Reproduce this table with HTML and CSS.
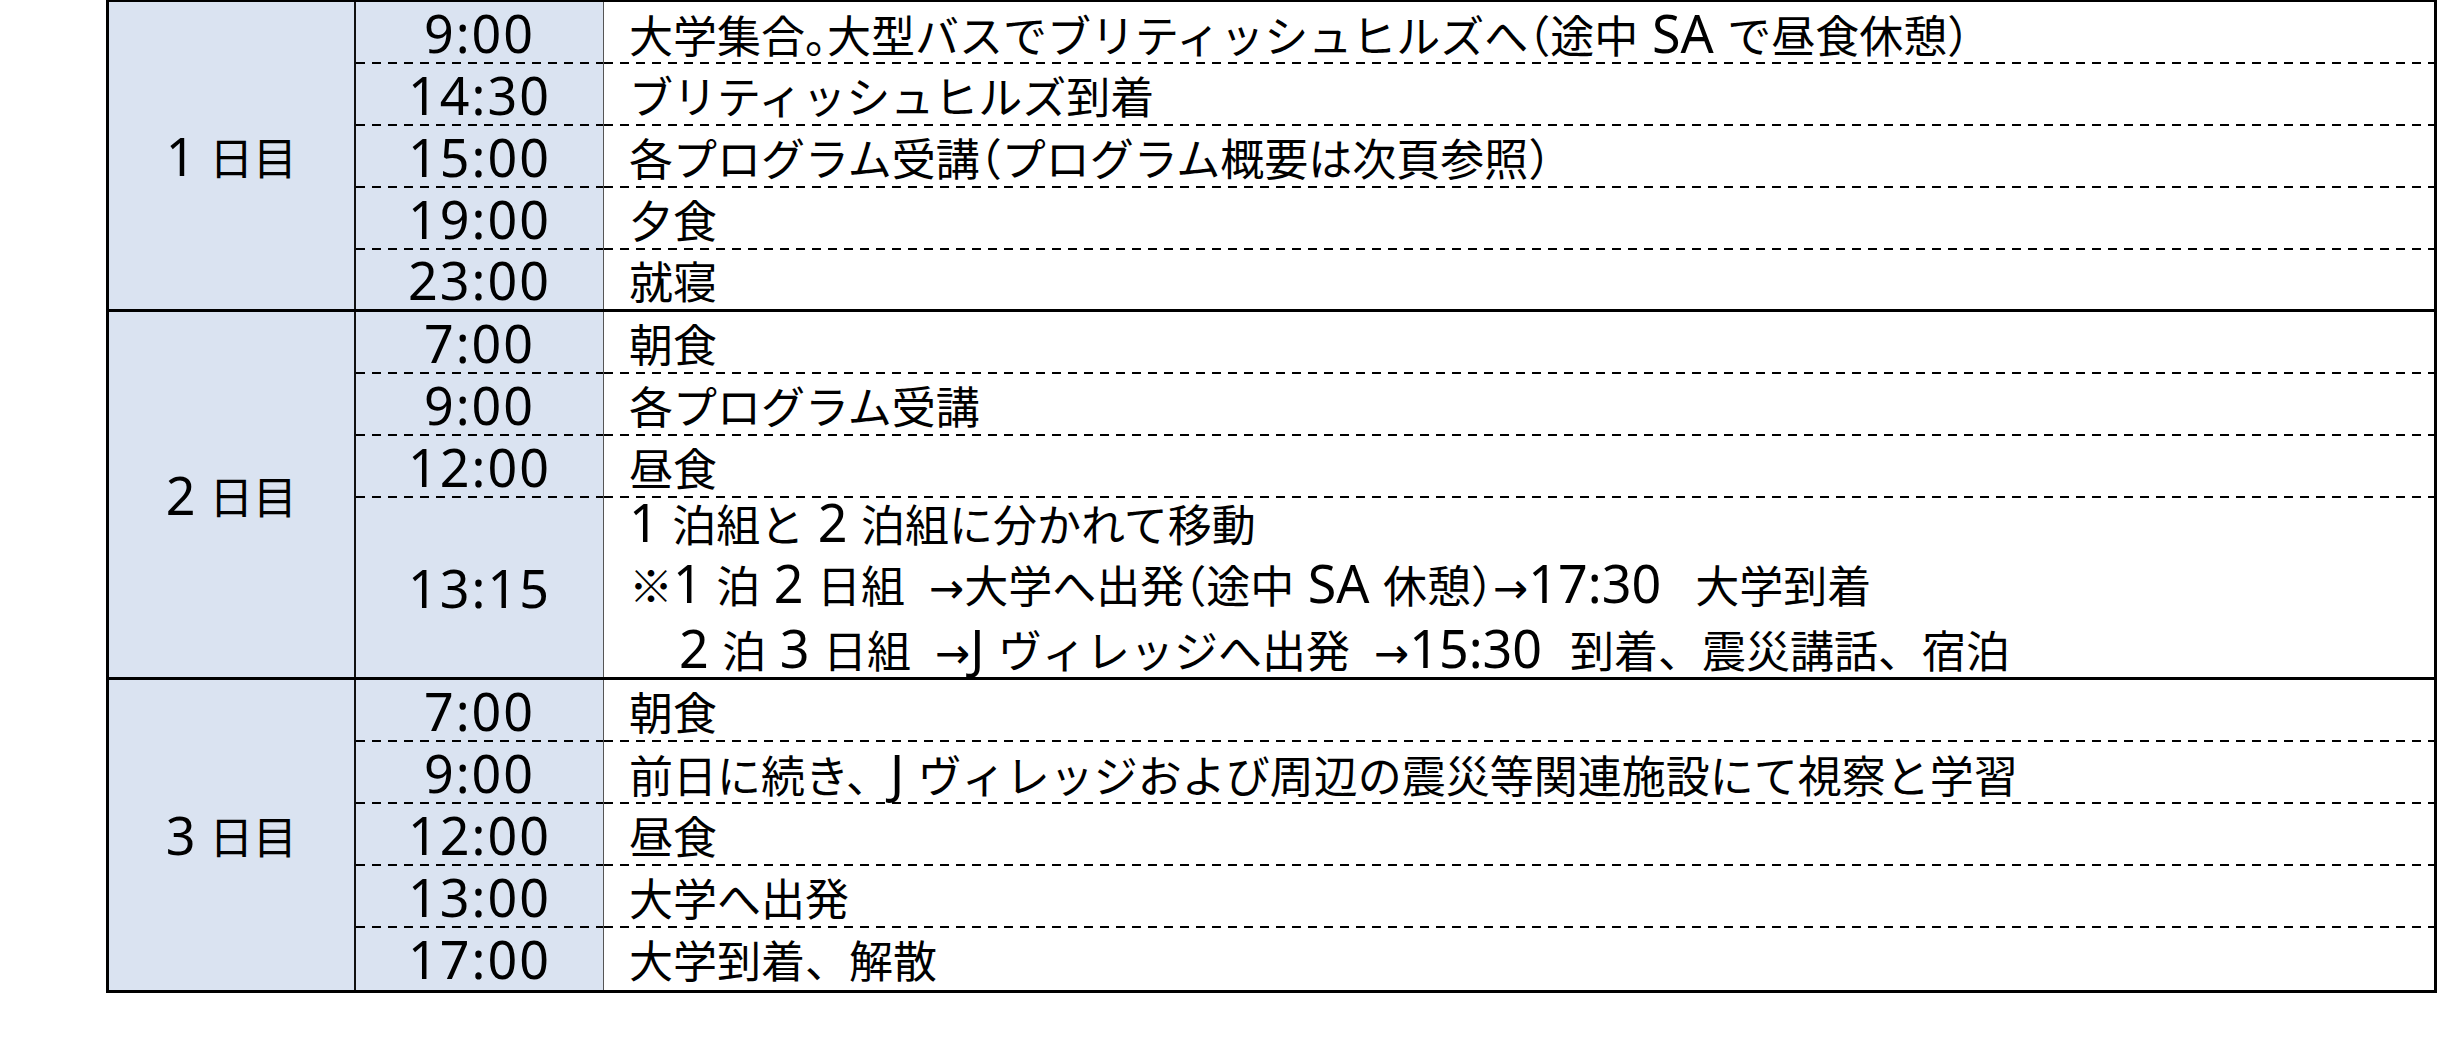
FILE: index.html
```html
<!DOCTYPE html>
<html lang="ja">
<head>
<meta charset="utf-8">
<title>日程表</title>
<link rel="stylesheet" href="styles.css">
</head>
<body>
<div class="schedule">
  <div class="group">
    <div class="day"><span class="lat">1 </span>日目</div>
    <div class="entries">
      <div class="entry"><div class="time">9:00</div><div class="text"><div class="line">大学集合<span class="h">。</span>大型バスでブリティッシュヒルズへ<span class="h">（</span>途中<span class="lat"> SA </span>で昼食休憩<span class="h">）</span></div></div></div>
      <div class="entry"><div class="time">14:30</div><div class="text"><div class="line">ブリティッシュヒルズ到着</div></div></div>
      <div class="entry"><div class="time">15:00</div><div class="text"><div class="line">各プログラム受講<span class="h">（</span>プログラム概要は次頁参照<span class="h">）</span></div></div></div>
      <div class="entry"><div class="time">19:00</div><div class="text"><div class="line">夕食</div></div></div>
      <div class="entry short"><div class="time">23:00</div><div class="text"><div class="line">就寝</div></div></div>
    </div>
  </div>
  <div class="group">
    <div class="day"><span class="lat">2 </span>日目</div>
    <div class="entries">
      <div class="entry"><div class="time">7:00</div><div class="text"><div class="line">朝食</div></div></div>
      <div class="entry"><div class="time">9:00</div><div class="text"><div class="line">各プログラム受講</div></div></div>
      <div class="entry"><div class="time">12:00</div><div class="text"><div class="line">昼食</div></div></div>
      <div class="entry tall"><div class="time">13:15</div>
        <div class="text">
          <div class="line"><span class="lat">1 </span>泊組と<span class="lat"> 2 </span>泊組に分かれて移動</div>
          <div class="line">※<span class="lat">1 </span>泊<span class="lat"> 2 </span>日組<span class="gap"></span><span class="arr">→</span>大学へ出発<span class="h">（</span>途中<span class="lat"> SA </span>休憩<span class="h">）</span><span class="arr">→</span><span class="lat">17:30</span><span class="gap wide"></span>大学到着</div>
          <div class="line indent"><span class="lat">2 </span>泊<span class="lat"> 3 </span>日組<span class="gap"></span><span class="arr">→</span><span class="lat">J </span>ヴィレッジへ出発<span class="gap"></span><span class="arr">→</span><span class="lat">15:30</span><span class="gap mid"></span>到着、震災講話、宿泊</div>
        </div>
      </div>
    </div>
  </div>
  <div class="group">
    <div class="day"><span class="lat">3 </span>日目</div>
    <div class="entries">
      <div class="entry"><div class="time">7:00</div><div class="text"><div class="line">朝食</div></div></div>
      <div class="entry"><div class="time">9:00</div><div class="text"><div class="line">前日に続き、<span class="lat">J </span>ヴィレッジおよび周辺の震災等関連施設にて視察と学習</div></div></div>
      <div class="entry"><div class="time">12:00</div><div class="text"><div class="line">昼食</div></div></div>
      <div class="entry"><div class="time">13:00</div><div class="text"><div class="line">大学へ出発</div></div></div>
      <div class="entry"><div class="time">17:00</div><div class="text"><div class="line">大学到着、解散</div></div></div>
    </div>
  </div>
</div>
</body>
</html>
```
FILE: styles.css
```css
html, body {
  margin: 0;
  padding: 0;
  background: #ffffff;
}

body {
  font-family: "Noto Sans CJK JP", sans-serif;
  font-size: 44px;
  color: #000000;
}

.schedule {
  margin: -1px 0 0 106px;
  width: 2331px;
  box-sizing: border-box;
  border: 3px solid #000000;
}

.group {
  display: flex;
}

.group + .group {
  border-top: 3px solid #000000;
}

.day {
  flex: none;
  width: 247px;
  box-sizing: border-box;
  border-right: 2px solid #111111;
  background: #dae3f1;
  display: flex;
  align-items: center;
  justify-content: center;
  line-height: 62px;
}

.entries {
  flex: 1;
  display: flex;
  flex-direction: column;
}

.entry {
  display: flex;
  height: 62px;
}

.entry.short {
  height: 59px;
}

.entry.tall {
  height: 179px;
}

.entry:not(:last-child) > .time,
.entry:not(:last-child) > .text {
  background-image: repeating-linear-gradient(90deg, #000000 0 9px, transparent 9px 16px);
  background-repeat: no-repeat;
  background-size: 100% 2px;
  background-position: 0 100%;
}

.time {
  flex: none;
  width: 248px;
  box-sizing: border-box;
  border-right: 1px solid #555555;
  background-color: #dae3f1;
  display: flex;
  align-items: center;
  justify-content: center;
  font-family: "Noto Sans", sans-serif;
  font-size: 52px;
  letter-spacing: 2px;
  line-height: 62px;
}

.text {
  flex: 1;
  display: flex;
  flex-direction: column;
  justify-content: center;
  padding-left: 25px;
  line-height: 60px;
  white-space: nowrap;
}

.tall .text {
  line-height: 59px;
}

.line.indent {
  padding-left: 50px;
}

.lat {
  font-family: "Noto Sans", sans-serif;
  font-size: 52px;
  white-space: pre;
}

.h {
  font-feature-settings: "halt";
}

.arr {
  font-family: "DejaVu Sans", sans-serif;
  font-size: 42px;
}

.gap {
  display: inline-block;
  width: 24px;
}

.gap.mid {
  width: 28px;
}

.gap.wide {
  width: 34px;
}
```
